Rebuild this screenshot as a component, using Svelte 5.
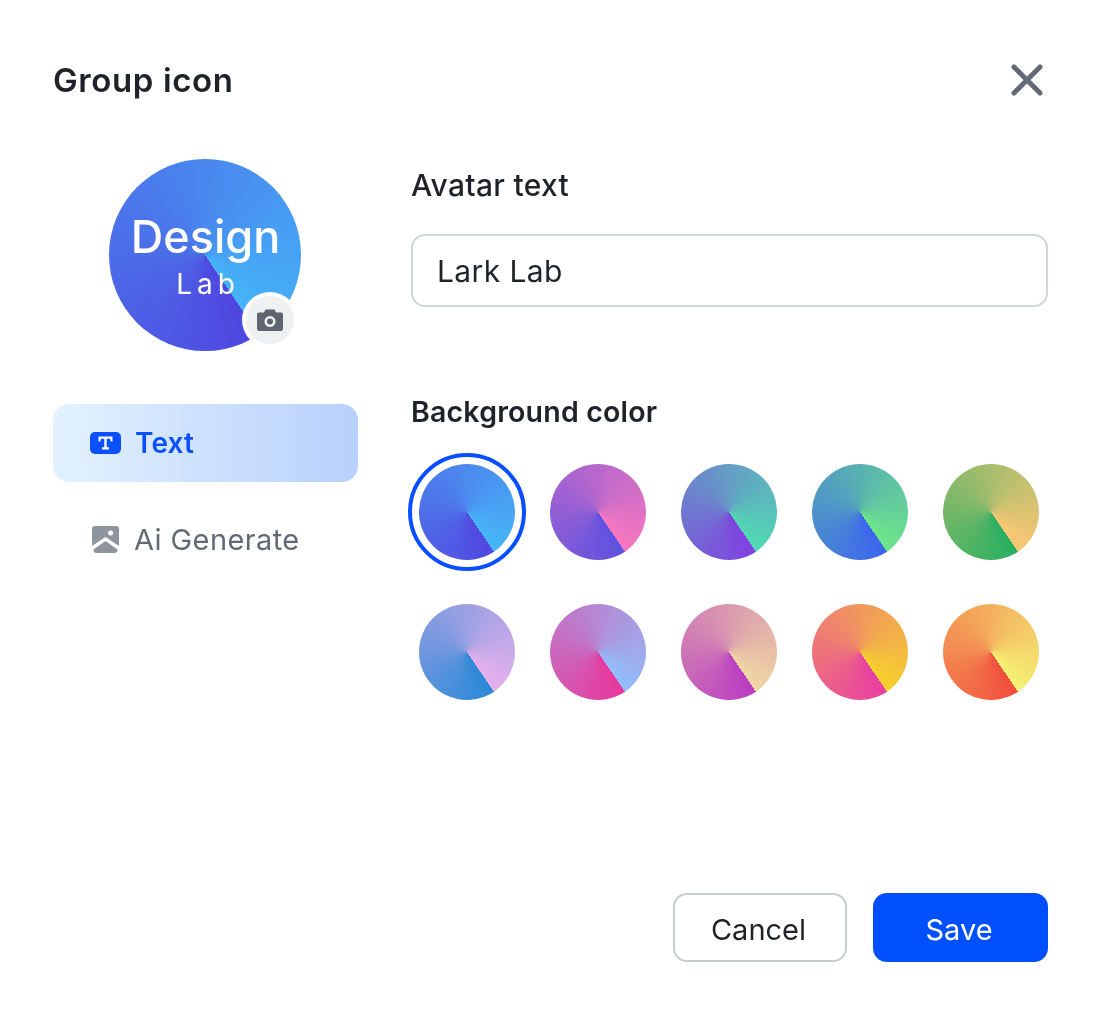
<script>
  const swatches = [
    ['#4f46e0', '#45b4f8'], ['#5a4fe0', '#f775bd'], ['#7d3fe0', '#4fd9b0'], ['#3a62ee', '#6ae585'], ['#27ad5e', '#fcc672'],
    ['#2a86d6', '#e6aeec'], ['#e8369a', '#8fbcfa'], ['#b93cc0', '#f0d6a0'], ['#e93da0', '#f6d02c'], ['#f24c3c', '#f5f272']
  ];
  const fill = (s) => `background: conic-gradient(from 146deg, ${s[0]}, ${s[1]})`;
</script>

<svg class="defs" width="0" height="0" aria-hidden="true">
  <filter id="grain" x="0" y="0" width="100%" height="100%">
    <feTurbulence type="fractalNoise" baseFrequency="0.9" numOctaves="2" seed="4"/>
    <feColorMatrix type="saturate" values="0"/>
  </filter>
</svg>

<div class="dialog">
  <header>
    <h1>Group icon</h1>
    <svg class="close" width="32" height="32" viewBox="0 0 32 32"><path d="M3 3 L29 29 M29 3 L3 29" stroke="#646a73" stroke-width="5" stroke-linecap="round" fill="none"/></svg>
  </header>

  <div class="body">
    <aside>
      <div class="avatar" style={fill(swatches[0])}>
        <span class="a1">Design</span>
        <span class="a2">Lab</span>
        <span class="badge">
          <svg width="26" height="22" viewBox="0 0 26 22"><path fill-rule="evenodd" fill="#5f656e" d="M8.5 0.5h9l1.6 3H24a2 2 0 0 1 2 2V20a2 2 0 0 1-2 2H2a2 2 0 0 1-2-2V5.500a2 2 0 0 1 2-2h4.900zM13 7a5.500 5.500 0 1 0 0 11a5.500 5.500 0 0 0 0-11zM13 9.500a3 3 0 1 1 0 6a3 3 0 0 1 0-6z"/></svg>
        </span>
      </div>
      <nav>
        <div class="tab active">
          <svg width="31" height="22" viewBox="0 0 31 22"><rect width="31" height="22" rx="5" fill="#0a50ff"/><path d="M8.500 4.500h14v5h-1.800l-.6-2.800h-3.400v8.600h2.300v2.200h-7v-2.200h2.300V6.700h-3.400l-.6 2.800H8.500z" fill="#fff"/></svg>
          <span>Text</span>
        </div>
        <div class="tab">
          <svg class="img" width="27" height="27" viewBox="0 0 27 27"><path d="M3 0h21a3 3 0 0 1 3 3v17L13.500 11L0 20V3a3 3 0 0 1 3-3z" fill="#8f959e"/><circle cx="18.600" cy="7" r="2.500" fill="#fff"/><path d="M13.500 15L25.500 23.500V24a3 3 0 0 1-3 3H4.500a3 3 0 0 1-3-3v-.5z" fill="#8f959e"/></svg>
          <span>Ai Generate</span>
        </div>
      </nav>
    </aside>

    <main>
      <label for="t">Avatar text</label>
      <input id="t" value="Lark Lab" />
      <h2>Background color</h2>
      <div class="grid">
        {#each swatches as s, i}
          <div class="cell" class:sel={i === 0}>
            <div class="sw" style={fill(s)}>
              <svg class="noise" width="96" height="96"><rect width="96" height="96" filter="url(#grain)"/></svg>
            </div>
          </div>
        {/each}
      </div>
    </main>
  </div>

  <footer>
    <button class="cancel">Cancel</button>
    <button class="save">Save</button>
  </footer>
</div>

<style>
  :global(body) { margin: 0; background: #fff; }
  .defs { position: absolute; }
  .dialog {
    width: 1101px; height: 1015px; box-sizing: border-box;
    padding: 60px 53px 53px; display: flex; flex-direction: column;
    font-family: "Inter", "Liberation Sans", sans-serif; color: #1f2329;
  }
  header { display: flex; justify-content: space-between; align-items: center; height: 40px; padding-right: 5px; }
  h1 { margin: 0; font-size: 33px; font-weight: 600; line-height: 40px; letter-spacing: .6px; }
  .body { display: flex; gap: 53px; margin-top: 59px; flex: 1; }
  aside { width: 305px; flex: none; }
  .avatar {
    position: relative; width: 192px; height: 192px; border-radius: 50%; margin: 0 0 0 56px;
    color: #fff; display: flex; flex-direction: column; align-items: center; box-sizing: border-box; padding-top: 50px;
  }
  .a1 { font-size: 45px; font-weight: 500; line-height: 56px; padding-left: 1px; }
  .a2 { font-size: 28px; line-height: 36px; letter-spacing: 5px; margin-top: 1px; padding-left: 6px; }
  .badge {
    position: absolute; left: 137px; top: 137px; width: 48px; height: 48px; border-radius: 50%;
    background: #eff0f1; box-shadow: 0 0 0 4px #fff; display: flex; align-items: center; justify-content: center;
  }
  nav { margin-top: 53px; display: flex; flex-direction: column; gap: 18px; }
  .tab {
    height: 78px; border-radius: 16px; display: flex; align-items: center; gap: 15px; padding-left: 37px;
    font-size: 29px; color: #646a73; letter-spacing: .4px;
  }
  .tab .img { margin-left: 2px; }
  .tab.active { background: linear-gradient(90deg, #e3f2ff, #b8d0fc); color: #0a50ff; font-weight: 600; font-size: 28px; letter-spacing: .1px; }
  .tab.active svg { margin-right: -1px; }
  main { flex: 1; padding-top: 8px; }
  label { display: block; font-size: 30px; line-height: 36px; font-weight: 500; letter-spacing: .3px; }
  input {
    display: block; width: 100%; box-sizing: border-box; height: 73px; margin-top: 31px; padding: 0 24px;
    border: 2px solid #d0d5dc; border-radius: 14px; font: 400 30px "Inter", sans-serif; color: #1f2329; outline: none;
    letter-spacing: .4px;
  }
  h2 { margin: 87px 0 0; font-size: 28.500px; line-height: 36px; font-weight: 600; letter-spacing: .2px; }
  .grid { display: grid; grid-template-columns: repeat(5, 96px); gap: 44px 35px; margin: 34px 0 0 8px; }
  .cell { position: relative; width: 96px; height: 96px; }
  .cell.sel::after {
    content: ""; position: absolute; inset: -11px; border: 4px solid #0a4fff; border-radius: 50%;
  }
  .sw { width: 96px; height: 96px; border-radius: 50%; overflow: hidden; }
  .noise { display: block; opacity: .1; mix-blend-mode: overlay; }
  footer { display: flex; justify-content: flex-end; gap: 26px; height: 69px; }
  button { height: 69px; border-radius: 14px; font: 400 29px "Inter", sans-serif; box-sizing: border-box; padding: 3px 3px 0 0; }
  .cancel { width: 174px; background: #fff; border: 2px solid #c8ccd0; color: #1f2329; }
  .save { width: 175px; background: #0050ff; border: none; color: #fff; }
</style>
